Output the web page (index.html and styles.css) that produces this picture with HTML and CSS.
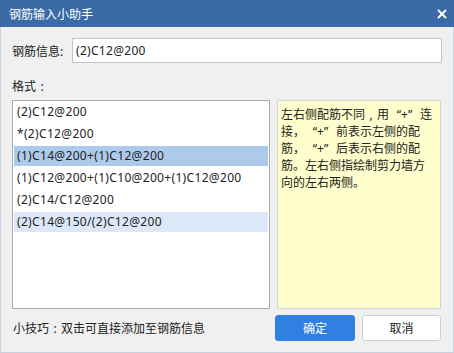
FILE: index.html
```html
<!DOCTYPE html>
<html lang="zh-CN">
<head>
  <meta charset="UTF-8">
  <meta name="viewport" content="width=device-width, initial-scale=1.0">
  <title>钢筋输入小助手</title>
  <link rel="stylesheet" href="styles.css">
</head>
<body>
  <div class="dialog">
    <div class="titlebar">
      <span class="title">钢筋输入小助手</span>
      <span class="close">
        <svg width="10" height="10" viewBox="0 0 10 10">
          <path d="M1 1 L9 9 M9 1 L1 9" stroke="#fff" stroke-width="2" fill="none"/>
        </svg>
      </span>
    </div>

    <div class="content">
      <!-- 钢筋信息 -->
      <div class="info-row">
        <label class="info-label">钢筋信息:</label>
        <input class="info-input" type="text" value="(2)C12@200">
      </div>

      <div class="format-label">格式<span class="colon">:</span></div>

      <div class="main">
        <ul class="format-list">
          <li>(2)C12@200</li>
          <li>*(2)C12@200</li>
          <li class="selected">(1)C14@200+(1)C12@200</li>
          <li>(1)C12@200+(1)C10@200+(1)C12@200</li>
          <li>(2)C14/C12@200</li>
          <li class="hover">(2)C14@150/(2)C12@200</li>
        </ul>
        <div class="hint">
          左右侧配筋不同<span class="comma">,</span>用<span class="lq">“</span>+<span class="rq">”</span>连<br>
          接<span class="comma">，</span><span class="lq">“</span>+<span class="rq">”</span>前表示左侧的配<br>
          筋<span class="comma">，</span><span class="lq">“</span>+<span class="rq">”</span>后表示右侧的配<br>
          筋。左右侧指绘制剪力墙方<br>
          向的左右两侧。
        </div>
      </div>

      <div class="footer">
        <span class="tip">小技巧<span class="colon">:</span>双击可直接添加至钢筋信息</span>
        <button class="btn btn-primary">确定</button>
        <button class="btn">取消</button>
      </div>
    </div>
  </div>
</body>
</html>
```

FILE: styles.css
```css
* {
  box-sizing: border-box;
}
body {
  margin: 0;
  font-family: "Noto Sans", "Noto Sans CJK SC", sans-serif;
  font-size: 12px;
  color: #222;
}
.dialog {
  width: 454px;
  height: 353px;
  background-color: #f0f0f0;
  display: flex;
  flex-direction: column;
}
.titlebar {
  height: 27px;
  background-color: #3a6ba6;
  color: #fff;
  display: flex;
  align-items: center;
  justify-content: space-between;
  padding: 0 7px 0 9px;
}
.title {
  font-size: 12px;
}
.close {
  display: flex;
  width: 10px;
  height: 10px;
}
.content {
  flex: 1;
  padding: 11px 12px 0 12px;
  border: 1px solid #c9d2de;
  border-top: none;
  display: flex;
  flex-direction: column;
}
.info-row {
  display: flex;
  align-items: center;
  height: 25px;
  margin-left: -1px;
}
.info-label {
  width: 60px;
}
.info-input {
  flex: 1;
  height: 25px;
  margin: 0 -1px 0 0;
  border: 1px solid #c4c5cb;
  background-color: #fff;
  padding: 0 3px;
  font-family: inherit;
  font-size: 12px;
  letter-spacing: 0.3px;
  color: #222;
  outline: none;
}
.format-label {
  margin-top: 16px;
  line-height: 16px;
  margin-left: -1px;
}
.colon,
.comma,
.lq,
.rq {
  display: inline-block;
  width: 12px;
}
.colon {
  text-align: center;
}
.comma {
  text-align: center;
}
.lq {
  text-align: right;
}
.rq {
  text-align: left;
}
.main {
  display: flex;
  gap: 7px;
  margin-top: 5px;
  height: 209px;
  margin-left: -1px;
}
.format-list {
  list-style-type: none;
  margin: 0;
  width: 258px;
  padding: 1px;
  border: 1px solid #ababab;
  background-color: #fff;
}
.format-list li {
  height: 20px;
  line-height: 20px;
  margin-bottom: 2px;
  padding-left: 3px;
  white-space: nowrap;
  letter-spacing: 0.33px;
  cursor: pointer;
}
.format-list .selected {
  background-color: #aecaeb;
}
.format-list .hover {
  background-color: #dce8f8;
}
.hint {
  flex: 1;
  background-color: #ffffcd;
  border: 1px solid #d6d6d6;
  padding: 5px 3px;
  line-height: 17px;
  color: #222;
  white-space: nowrap;
}
.footer {
  display: flex;
  align-items: center;
  margin-top: 6px;
  height: 26px;
}
.tip {
  flex: 1;
  color: #222;
}
.btn {
  width: 79px;
  height: 26px;
  margin-left: 7px;
  border: 1px solid #cfcfcf;
  border-radius: 3px;
  background-color: #fff;
  font-family: inherit;
  font-size: 12px;
  color: #222;
  padding: 0;
}
.btn-primary {
  width: 80px;
  background-color: #2f80e0;
  border-color: #2f80e0;
  color: #fff;
}
```
